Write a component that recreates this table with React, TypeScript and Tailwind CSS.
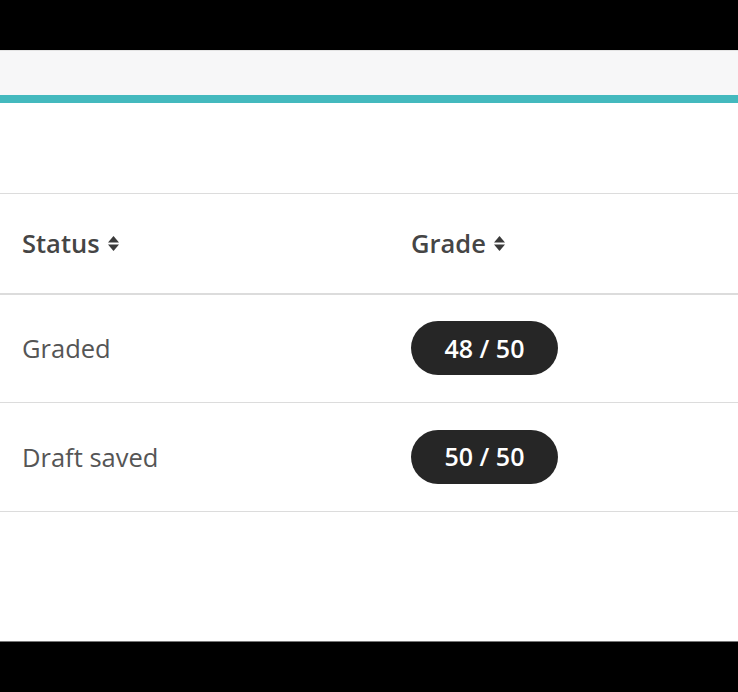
import React from "react";

const rows = [
  { status: "Graded", grade: "48 / 50" },
  { status: "Draft saved", grade: "50 / 50" },
];

function SortIcon() {
  return (
    <svg width="13" height="17" viewBox="0 0 13 17" className="ml-[7px] shrink-0">
      <path d="M6.5 1 L12 7.5 L1 7.5 Z" fill="#3a3a3a" />
      <path d="M6.5 16 L12 9.5 L1 9.5 Z" fill="#3a3a3a" />
    </svg>
  );
}

export default function App() {
  return (
    <div
      className="flex h-[692px] w-[738px] flex-col overflow-hidden bg-black"
      style={{ fontFamily: '"Open Sans", "Liberation Sans", sans-serif' }}
    >
      <div className="h-[50px] shrink-0 bg-black" />
      <div className="h-[45px] shrink-0 border-t border-[#e4e4e4] bg-[#f7f7f8]" />
      <div className="h-[8px] shrink-0 bg-[#44b9be]" />
      <div className="flex-1 bg-white">
        <div className="h-[90px]" />
        <table className="w-full border-collapse">
          <thead>
            <tr className="h-[100px] border-t border-b-2 border-[#dcdcdc]">
              <th className="w-[390px] pl-[22px] text-left align-middle">
                <span className="flex items-center text-[25.5px] font-semibold text-[#454545]">
                  Status
                  <SortIcon />
                </span>
              </th>
              <th className="pl-[21px] text-left align-middle">
                <span className="flex items-center text-[25.5px] font-semibold text-[#454545]">
                  Grade
                  <SortIcon />
                </span>
              </th>
            </tr>
          </thead>
          <tbody>
            {rows.map((r) => (
              <tr key={r.status} className="h-[109px] border-b border-[#dcdcdc]">
                <td className="pl-[22px] align-middle text-[25.5px] text-[#555]">{r.status}</td>
                <td className="pl-[21px] align-middle">
                  <span className="inline-flex h-[54px] w-[147px] items-center justify-center rounded-full bg-[#262626] text-[25px] font-semibold text-white">
                    {r.grade}
                  </span>
                </td>
              </tr>
            ))}
          </tbody>
        </table>
      </div>
      <div className="h-[51px] shrink-0 border-t border-[#777] bg-black" />
    </div>
  );
}
